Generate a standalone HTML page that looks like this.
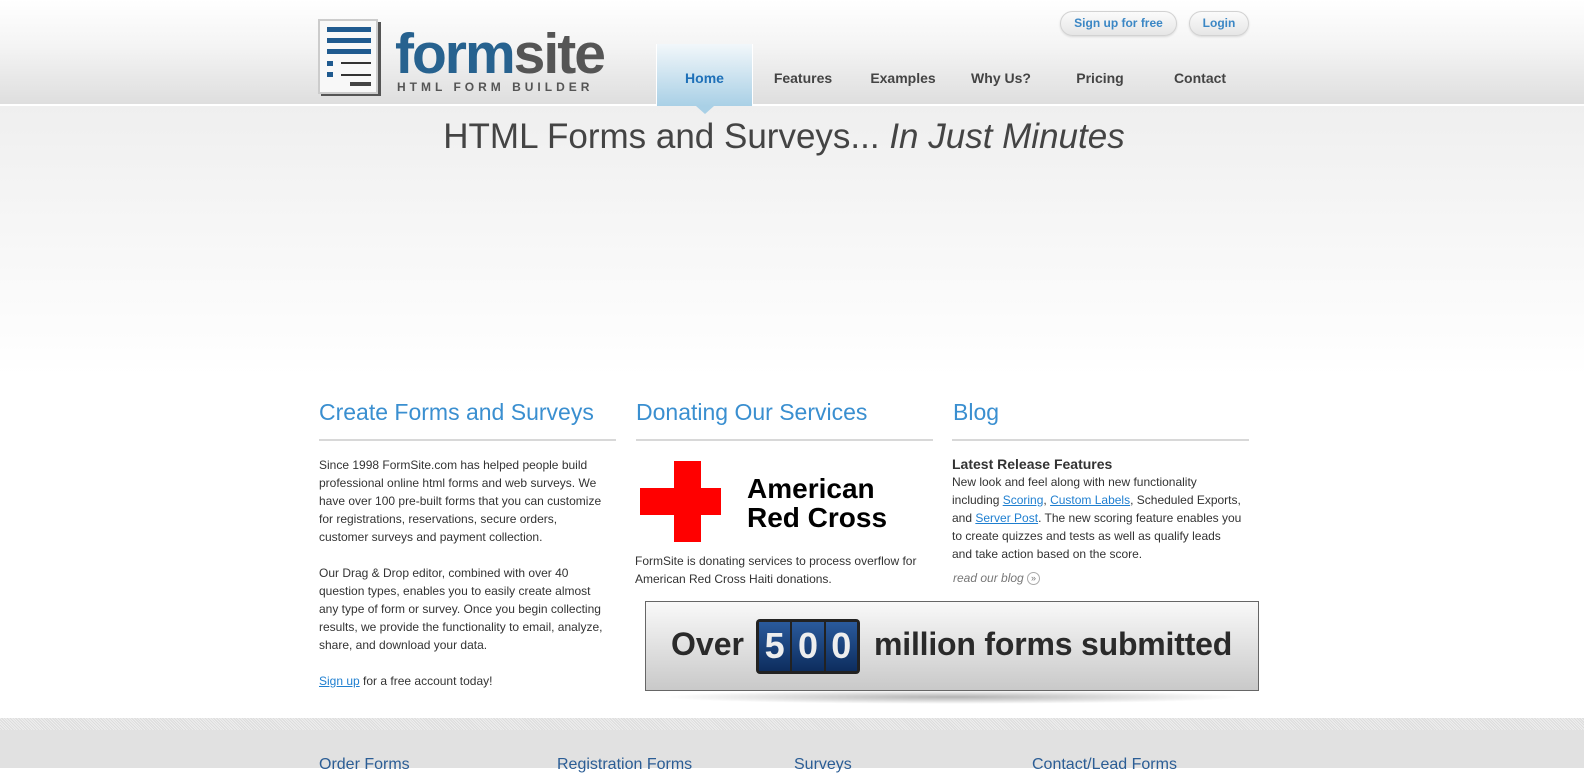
<!DOCTYPE html>
<html><head><style>
*{margin:0;padding:0;box-sizing:border-box}
body{width:1584px;height:768px;overflow:hidden;font-family:"Liberation Sans",sans-serif;background:#fff;position:relative}
.hdr{position:absolute;left:0;top:0;width:1584px;height:105px;background:linear-gradient(#fff 0%,#f4f4f4 45%,#dedede 100%);border-bottom:1px solid #fff}
.band{position:absolute;left:0;top:106px;width:1584px;height:270px;background:linear-gradient(#efefef,#fff)}
.abs{position:absolute}
.nav{position:absolute;top:70px;font-size:14px;font-weight:bold;color:#444;text-align:center}
.btn{position:absolute;top:11px;height:25px;border-radius:13px;background:linear-gradient(#fbfbfb,#e6e6e6);border:1px solid #d2d2d2;color:#3b87c5;font-size:12px;font-weight:bold;text-align:center;line-height:23px;box-shadow:0 1px 2px rgba(0,0,0,.12)}
h2{position:absolute;top:399px;font-size:23px;font-weight:normal;color:#3a8fd0}
.rule{position:absolute;top:439px;width:297px;height:2px;background:#d8d8d8}
.txt{position:absolute;font-size:12px;line-height:18px;color:#333}
a{color:#1f7fd0}
.d{flex:1;background:linear-gradient(#2a5a9c,#0d2d5e);color:#eee;font-size:36px;font-weight:bold;text-align:center;line-height:48px}
</style></head><body>
<div class="hdr"></div>
<div class="band"></div>
<div class="abs" style="left:321px;top:22px;width:60px;height:74px;background:#555"></div>
<div class="abs" style="left:318px;top:19px;width:60px;height:75px;background:#f8f8f8;border:2px solid #ccc"></div>
<div class="abs" style="left:327px;top:27px;width:44px;height:5px;background:#1f5a8f"></div>
<div class="abs" style="left:327px;top:38px;width:44px;height:5px;background:#1f5a8f"></div>
<div class="abs" style="left:327px;top:49px;width:44px;height:5px;background:#1f5a8f"></div>
<div class="abs" style="left:327px;top:61px;width:6px;height:5px;background:#1f5a8f"></div>
<div class="abs" style="left:341px;top:62px;width:30px;height:2px;background:#333"></div>
<div class="abs" style="left:327px;top:72px;width:6px;height:5px;background:#1f5a8f"></div>
<div class="abs" style="left:341px;top:74px;width:30px;height:2px;background:#333"></div>
<div class="abs" style="left:350px;top:82px;width:21px;height:4px;background:#444"></div>
<div class="abs" style="left:395px;top:26px;font-size:57px;font-weight:bold;letter-spacing:-2px;line-height:56px"><span style="color:#27628f">form</span><span style="color:#555">site</span></div>
<div class="abs" style="left:397px;top:80px;font-size:12px;font-weight:bold;letter-spacing:4px;color:#555">HTML FORM BUILDER</div>
<div class="abs" style="left:656px;top:44px;width:97px;height:62px;background:linear-gradient(#f2f7fa,#a9d0e6);border-left:1px solid #fff;border-right:1px solid #fff"></div>
<div class="abs" style="left:696px;top:106px;width:0;height:0;border-left:9px solid transparent;border-right:9px solid transparent;border-top:8px solid #a9d0e6"></div>
<div class="nav" style="left:656px;width:97px;color:#1e70b8">Home</div>
<div class="nav" style="left:763px;width:80px">Features</div>
<div class="nav" style="left:860px;width:86px">Examples</div>
<div class="nav" style="left:961px;width:80px">Why Us?</div>
<div class="nav" style="left:1060px;width:80px">Pricing</div>
<div class="nav" style="left:1160px;width:80px">Contact</div>
<div class="btn" style="left:1060px;width:117px">Sign up for free</div>
<div class="btn" style="left:1189px;width:60px">Login</div>
<div class="abs" style="left:0;width:1568px;top:117px;text-align:center;font-size:35px;color:#444">HTML Forms and Surveys... <i>In Just Minutes</i></div>
<h2 style="left:319px">Create Forms and Surveys</h2>
<h2 style="left:636px">Donating Our Services</h2>
<h2 style="left:953px">Blog</h2>
<div class="rule" style="left:319px"></div>
<div class="rule" style="left:636px"></div>
<div class="rule" style="left:952px"></div>
<div class="txt" style="left:319px;top:456px;width:290px">Since 1998 FormSite.com has helped people build professional online html forms and web surveys. We have over 100 pre-built forms that you can customize for registrations, reservations, secure orders, customer surveys and payment collection.<br><br>Our Drag &amp; Drop editor, combined with over 40 question types, enables you to easily create almost any type of form or survey. Once you begin collecting results, we provide the functionality to email, analyze, share, and download your data.<br><br><a href="#">Sign up</a> for a free account today!</div>
<div class="abs" style="left:674px;top:461px;width:27px;height:81px;background:#f00"></div>
<div class="abs" style="left:640px;top:488px;width:81px;height:27px;background:#f00"></div>
<div class="abs" style="left:747px;top:474px;font-size:28px;font-weight:bold;line-height:29px;color:#000">American<br>Red Cross</div>
<div class="txt" style="left:635px;top:552px;width:300px">FormSite is donating services to process overflow for American Red Cross Haiti donations.</div>
<div class="abs" style="left:952px;top:456px;font-size:14px;font-weight:bold;color:#333">Latest Release Features</div>
<div class="txt" style="left:952px;top:473px;width:292px">New look and feel along with new functionality including <a href="#">Scoring</a>, <a href="#">Custom Labels</a>, Scheduled Exports, and <a href="#">Server Post</a>. The new scoring feature enables you to create quizzes and tests as well as qualify leads and take action based on the score.</div>
<div class="txt" style="left:953px;top:569px;font-style:italic;color:#777">read our blog <span style="display:inline-block;width:13px;height:13px;border:1px solid #aaa;border-radius:50%;font-size:9px;line-height:11px;text-align:center;font-style:normal;vertical-align:middle">»</span></div>
<div class="abs" style="left:660px;top:690px;width:585px;height:14px;border-radius:50%;background:radial-gradient(ellipse at center,rgba(0,0,0,.3),rgba(0,0,0,0) 70%)"></div>
<div class="abs" style="left:645px;top:601px;width:614px;height:90px;border:1px solid #666;background:linear-gradient(#f9f9f9,#c9c9c9)"></div>
<div class="abs" style="left:671px;top:626px;font-size:32px;font-weight:bold;color:#2a2a2a">Over</div>
<div class="abs" style="left:756px;top:619px;width:104px;height:55px;background:#222;border-radius:4px;padding:3px;display:flex;gap:2px">
<div class="d">5</div><div class="d">0</div><div class="d">0</div></div>
<div class="abs" style="left:874px;top:626px;font-size:32px;font-weight:bold;color:#2a2a2a;letter-spacing:-0.2px">million forms submitted</div>
<div class="abs" style="left:0;top:718px;width:1584px;height:12px;background:repeating-linear-gradient(45deg,#eee 0 1px,#dcdcdc 1px 2px)"></div>
<div class="abs" style="left:0;top:730px;width:1584px;height:38px;background:#e1e1e1"></div>
<div class="abs" style="left:319px;top:756px;font-size:16px;color:#2b5d95">Order Forms</div>
<div class="abs" style="left:557px;top:756px;font-size:16px;color:#2b5d95">Registration Forms</div>
<div class="abs" style="left:794px;top:756px;font-size:16px;color:#2b5d95">Surveys</div>
<div class="abs" style="left:1032px;top:756px;font-size:16px;color:#2b5d95">Contact/Lead Forms</div>
</body></html>
